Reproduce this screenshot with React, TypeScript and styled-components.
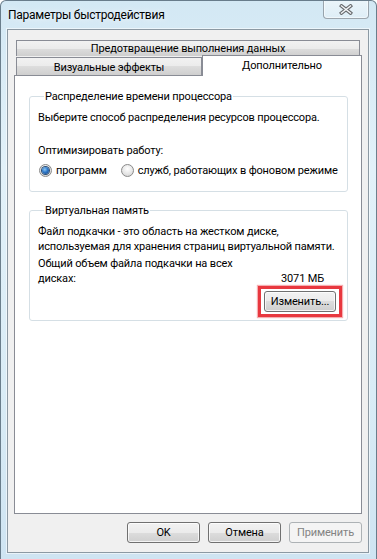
import { createGlobalStyle, styled } from 'styled-components';

const GlobalStyle = createGlobalStyle`
  html, body {
    margin: 0;
    padding: 0;
  }
  body {
    font-family: Roboto, 'Noto Sans', sans-serif;
    font-size: 11px;
    letter-spacing: -0.15px;
    color: #000;
  }
  * {
    box-sizing: border-box;
  }
`;

const Window = styled.div`
  width: 377px;
  height: 559px;
  display: flex;
  flex-direction: column;
  background: linear-gradient(
    180deg,
    #d3e8f4 0%,
    #e2f1f9 30%,
    #d9ecf6 70%,
    #cfe4f2 100%
  );
  border: 1px solid rgba(70, 90, 105, 0.75);
  border-bottom: none;
  border-radius: 6px 6px 0 0;
  overflow: hidden;
`;

const TitleBar = styled.div`
  height: 28px;
  display: flex;
  justify-content: space-between;
  align-items: flex-start;
`;

const Title = styled.div`
  padding: 7px 0 0 7px;
  font-size: 12px;
  letter-spacing: -0.25px;
  line-height: 15px;
  white-space: nowrap;
  text-shadow: 0 0 6px rgba(255, 255, 255, 0.9);
`;

const CloseButton = styled.div`
  width: 46px;
  height: 19px;
  margin: -1px 7px 0 0;
  display: flex;
  align-items: center;
  justify-content: center;
  border: 1px solid rgba(60, 70, 80, 0.45);
  border-top: none;
  border-radius: 0 0 4px 4px;
  background: linear-gradient(
    180deg,
    rgba(255, 255, 255, 0.55) 0%,
    rgba(255, 255, 255, 0.25) 100%
  );
  box-shadow: inset 0 0 0 1px rgba(255, 255, 255, 0.5);
`;

const Client = styled.div`
  flex: 1;
  margin: 0 7px 6px 6px;
  background: #f0f0f0;
  border: 1px solid #8c99a3;
  box-shadow: 0 0 0 1px rgba(255, 255, 255, 0.55);
  padding: 10px 6px 0 6px;
  display: flex;
  flex-direction: column;
`;

const TabControl = styled.div`
  display: flex;
  flex-direction: column;
`;

const tabFace = `
  border: 1px solid #898c95;
  background: linear-gradient(180deg, #f2f2f2 0%, #ebebeb 50%, #dddddd 50%, #cfcfcf 100%);
  display: flex;
  align-items: center;
  justify-content: center;
  line-height: 15px;
  white-space: nowrap;
`;

const TopTab = styled.div`
  ${tabFace}
  height: 16px;
  margin: 0 2px;
  border-bottom: none;
`;

const TabRow = styled.div`
  height: 19px;
  display: flex;
  align-items: flex-end;
`;

const Tab = styled.div<{ $width: number }>`
  ${tabFace}
  width: ${(p) => p.$width}px;
  height: 18px;
  margin-left: 2px;
  border-bottom: none;
  padding-top: 1px;
`;

const ActiveTab = styled.div`
  flex: 1;
  height: 21px;
  margin-bottom: -1px;
  position: relative;
  z-index: 1;
  background: #fff;
  border: 1px solid #898c95;
  border-bottom: none;
  display: flex;
  justify-content: center;
  padding-top: 2px;
  line-height: 15px;
`;

const Panel = styled.div`
  height: 439px;
  background: #fff;
  border: 1px solid #898c95;
  padding: 13px 13px 0 14px;
  display: flex;
  flex-direction: column;
`;

const GroupBox = styled.fieldset<{ $gap?: number; $bottom?: number }>`
  margin: ${(p) => p.$gap ?? 0}px 0 0 0;
  padding: 6px 8px ${(p) => p.$bottom ?? 13}px 8px;
  min-width: 0;
  width: 319px;
  border: 1px solid #d5dfe5;
  border-radius: 3px;
`;

const Legend = styled.legend`
  margin-left: 6px;
  padding: 0 1px;
  line-height: 15px;
  white-space: nowrap;
`;

const Line = styled.div<{ $gap?: number }>`
  line-height: 15px;
  white-space: nowrap;
  margin-top: ${(p) => p.$gap ?? 0}px;
`;

const RadioRow = styled.div`
  margin-top: 5px;
  display: flex;
  align-items: center;
  gap: 13px;
  line-height: 15px;
  white-space: nowrap;
`;

const RadioOption = styled.label`
  display: flex;
  align-items: center;
  gap: 4px;
`;

const RadioCircle = styled.span<{ $checked?: boolean }>`
  width: 13px;
  height: 13px;
  margin-left: 1px;
  border-radius: 50%;
  border: 1px solid #8a8a8a;
  background: radial-gradient(circle at 50% 35%, #ffffff 0%, #e6e6e6 55%, #cfcfcf 100%);
  display: flex;
  align-items: center;
  justify-content: center;
  &::after {
    content: '';
    display: ${(p) => (p.$checked ? 'block' : 'none')};
    width: 7px;
    height: 7px;
    border-radius: 50%;
    background: radial-gradient(circle at 40% 35%, #8cc8f5 0%, #2f78c8 45%, #123f7e 100%);
    box-shadow: 0 0 0 1px #2c4e73;
  }
`;

const SizeRow = styled.div`
  margin-top: 2px;
  display: flex;
  align-items: flex-end;
  justify-content: space-between;
  line-height: 15px;
  white-space: nowrap;
`;

const SizeValue = styled.span`
  margin-right: 15px;
`;

const ButtonRow = styled.div<{ $top?: number }>`
  display: flex;
  justify-content: flex-end;
  gap: 8px;
  margin-top: ${(p) => p.$top ?? 0}px;
`;

const Highlight = styled.div`
  margin-right: -3px;
  padding: 2px 3px;
  border: 3px solid #e8383f;
  box-shadow: 0 0 1px 1px rgba(240, 120, 125, 0.6);
`;

const Button = styled.button<{ $width: number }>`
  width: ${(p) => p.$width}px;
  height: 21px;
  padding: 0;
  font: inherit;
  letter-spacing: inherit;
  line-height: 15px;
  color: #000;
  border: 1px solid #707070;
  border-radius: 3px;
  background: linear-gradient(180deg, #f2f2f2 0%, #ebebeb 50%, #dddddd 50%, #cfcfcf 100%);
  box-shadow: inset 0 0 0 1px rgba(255, 255, 255, 0.75);
  &:disabled {
    color: #838383;
    border-color: #adb2b5;
    background: #f4f4f4;
    box-shadow: none;
  }
`;

function CloseGlyph() {
  return (
    <svg width="14" height="11" viewBox="0 0 14 11">
      <path d="M2.5 2 L11.5 9 M11.5 2 L2.5 9" stroke="#6a6d70" strokeWidth="3.6" strokeLinecap="square" />
      <path d="M2.5 2 L11.5 9 M11.5 2 L2.5 9" stroke="#f4f6f8" strokeWidth="1.4" strokeLinecap="square" />
    </svg>
  );
}

function App() {
  return (
    <>
      <GlobalStyle />
      <Window>
        <TitleBar>
          <Title>Параметры быстродействия</Title>
          <CloseButton>
            <CloseGlyph />
          </CloseButton>
        </TitleBar>
        <Client>
          <TabControl>
            <TopTab>Предотвращение выполнения данных</TopTab>
            <TabRow>
              <Tab $width={186}>Визуальные эффекты</Tab>
              <ActiveTab>Дополнительно</ActiveTab>
            </TabRow>
            <Panel>
              <GroupBox>
                <Legend>Распределение времени процессора</Legend>
                <Line>Выберите способ распределения ресурсов процессора.</Line>
                <Line $gap={18}>Оптимизировать работу:</Line>
                <RadioRow>
                  <RadioOption>
                    <RadioCircle $checked />
                    программ
                  </RadioOption>
                  <RadioOption>
                    <RadioCircle />
                    служб, работающих в фоновом режиме
                  </RadioOption>
                </RadioRow>
              </GroupBox>
              <GroupBox $gap={11} $bottom={3}>
                <Legend>Виртуальная память</Legend>
                <Line>
                  Файл подкачки - это область на жестком диске,
                  <br />
                  используемая для хранения страниц виртуальной памяти.
                </Line>
                <SizeRow>
                  <span>
                    Общий объем файла подкачки на всех
                    <br />
                    дисках:
                  </span>
                  <SizeValue>3071 МБ</SizeValue>
                </SizeRow>
                <ButtonRow>
                  <Highlight>
                    <Button $width={72}>Изменить...</Button>
                  </Highlight>
                </ButtonRow>
              </GroupBox>
            </Panel>
          </TabControl>
          <ButtonRow $top={8}>
            <Button $width={73}>OK</Button>
            <Button $width={73}>Отмена</Button>
            <Button $width={73} disabled>
              Применить
            </Button>
          </ButtonRow>
        </Client>
      </Window>
    </>
  );
}

export default App;
